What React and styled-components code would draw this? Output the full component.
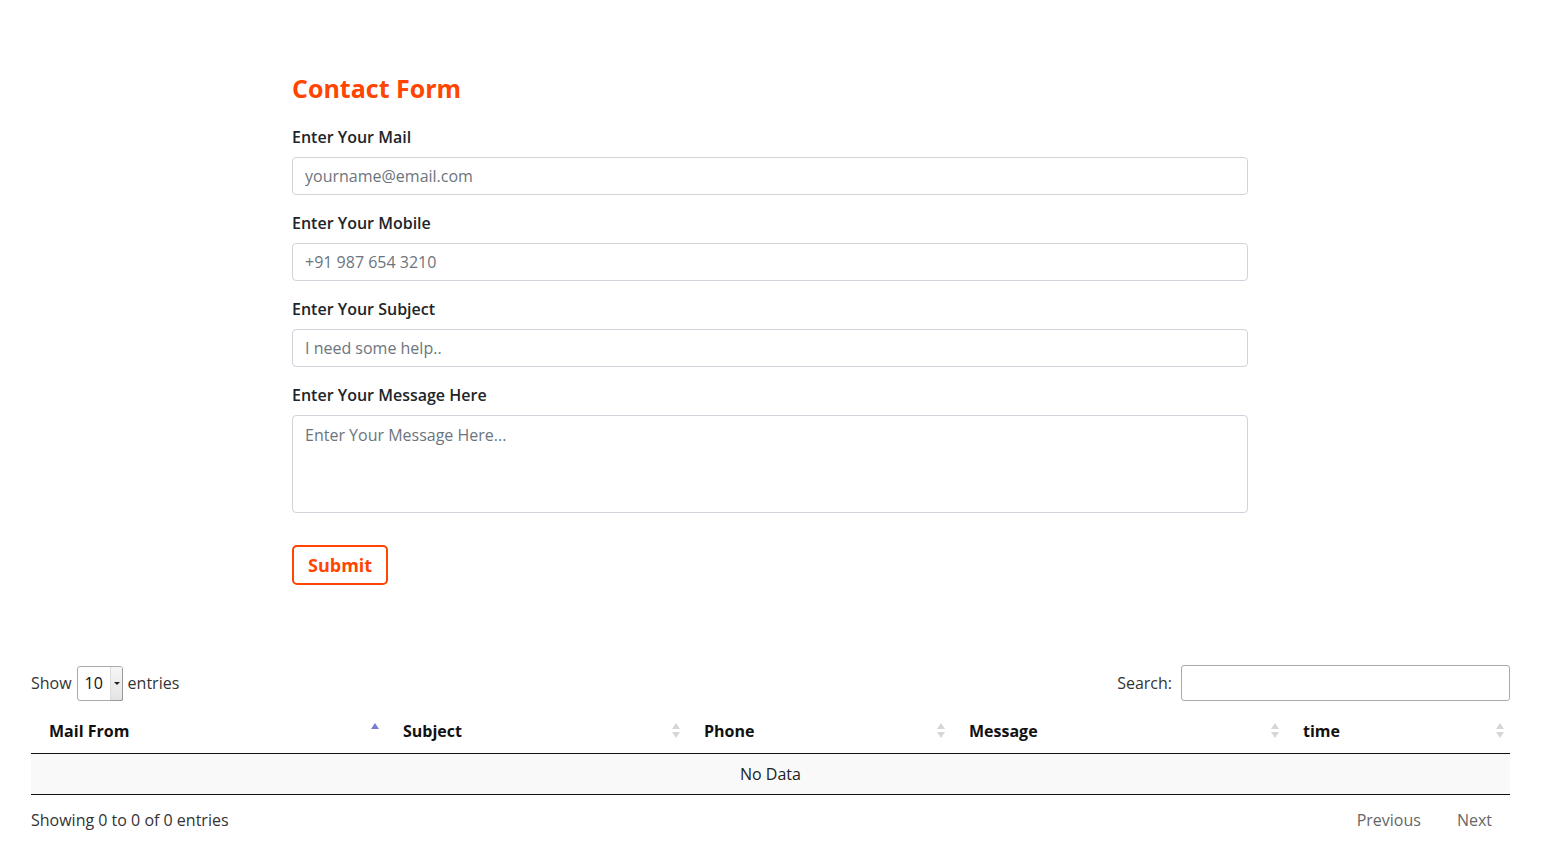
import React from 'react';
import styled, { createGlobalStyle } from 'styled-components';

const GlobalStyle = createGlobalStyle`
  html, body {
    margin: 0;
    padding: 0;
    background: #fff;
    font-family: "Open Sans", "Liberation Sans", sans-serif;
    color: #212529;
  }
  * { box-sizing: border-box; }
`;

const Page = styled.div`
  width: 1541px;
  padding: 73px 31px 16px;
`;

const FormBox = styled.form`
  width: 956px;
  margin-left: 261px;
`;

const Title = styled.h2`
  margin: 0 0 22px;
  font-size: 25px;
  line-height: 30px;
  font-weight: 700;
  color: #ff4500;
`;

const Field = styled.div`
  margin-bottom: ${(p) => (p.last ? '32px' : '16px')};
`;

const Label = styled.label`
  display: block;
  font-size: 16px;
  line-height: 24px;
  font-weight: 600;
  color: #212529;
  margin-bottom: 8px;
`;

const Input = styled.input`
  display: block;
  width: 100%;
  height: 38px;
  padding: 6px 12px;
  font-family: inherit;
  font-size: 16px;
  color: #495057;
  border: 1px solid #ced4da;
  border-radius: 4px;
  outline: none;
  &::placeholder { color: #6c757d; }
`;

const TextArea = styled.textarea`
  display: block;
  width: 100%;
  height: 98px;
  padding: 7px 12px;
  font-family: inherit;
  font-size: 16px;
  line-height: 24px;
  color: #495057;
  border: 1px solid #ced4da;
  border-radius: 4px;
  resize: none;
  outline: none;
  &::placeholder { color: #6c757d; }
`;

const SubmitButton = styled.button`
  height: 40px;
  padding: 0 14px;
  background: #fff;
  border: 2px solid #ff4500;
  border-radius: 5px;
  color: #ff4500;
  font-family: inherit;
  font-size: 18px;
  font-weight: 700;
  cursor: pointer;
`;

const TableArea = styled.section`
  margin-top: 80px;
  font-size: 16px;
  color: #333;
`;

const Controls = styled.div`
  display: flex;
  align-items: center;
  justify-content: space-between;
  height: 36px;
  margin-bottom: 8px;
`;

const Inline = styled.label`
  display: flex;
  align-items: center;
  gap: 5px;
  line-height: 24px;
`;

const SelectWrap = styled.span`
  position: relative;
  display: inline-block;
  width: 46px;
  height: 35px;
`;

const Select = styled.select`
  appearance: none;
  width: 100%;
  height: 100%;
  padding: 0 0 0 7px;
  font-family: inherit;
  font-size: 16px;
  color: #111;
  background: #fff;
  border: 1px solid #aaa;
  border-radius: 3px;
  outline: none;
`;

const SelectArrow = styled.span`
  position: absolute;
  top: 1px;
  right: 1px;
  bottom: 1px;
  width: 12px;
  background: linear-gradient(#f6f6f6, #e4e4e4);
  border-left: 1px solid #ddd;
  border-radius: 0 2px 2px 0;
  box-shadow: 1px 1px 0 #999;
  pointer-events: none;
  &::after {
    content: '';
    position: absolute;
    top: 15px;
    left: 3px;
    border-left: 3px solid transparent;
    border-right: 3px solid transparent;
    border-top: 3px solid #222;
  }
`;

const SearchInput = styled.input`
  width: 329px;
  height: 36px;
  margin-left: 4px;
  padding: 4px 8px;
  font-family: inherit;
  font-size: 16px;
  border: 1px solid #aaa;
  border-radius: 3px;
  outline: none;
`;

const Table = styled.table`
  width: 100%;
  border-collapse: collapse;
  table-layout: fixed;
`;

const Th = styled.th`
  position: relative;
  padding: 10px 18px;
  text-align: left;
  font-size: 16px;
  line-height: 24px;
  font-weight: 700;
  color: #111;
  border-bottom: 1px solid #111;
  cursor: pointer;
  &::before, &::after {
    content: '';
    position: absolute;
    right: 6px;
    border-left: 4px solid transparent;
    border-right: 4px solid transparent;
  }
  &::before {
    top: 14px;
    border-bottom: 6px solid ${(p) => (p.sorted ? '#7b7bd8' : '#d6d6d6')};
  }
  &::after {
    top: 23px;
    display: ${(p) => (p.sorted ? 'none' : 'block')};
    border-top: 6px solid #d6d6d6;
  }
`;

const EmptyCell = styled.td`
  padding: 8px 10px;
  text-align: center;
  line-height: 24px;
  color: #222;
  background: #f9f9f9;
  border-bottom: 1px solid #111;
`;

const Footer = styled.div`
  display: flex;
  justify-content: space-between;
  align-items: center;
  margin-top: 12px;
  line-height: 24px;
`;

const Pager = styled.div`
  display: flex;
`;

const PageButton = styled.span`
  padding: 1px 18px;
  color: #666;
  cursor: default;
`;

const columns = [
  { name: 'Mail From', width: 354, sorted: true },
  { name: 'Subject', width: 301 },
  { name: 'Phone', width: 265 },
  { name: 'Message', width: 334 },
  { name: 'time', width: 225 },
];

const fields = [
  { label: 'Enter Your Mail', placeholder: 'yourname@email.com', type: 'email' },
  { label: 'Enter Your Mobile', placeholder: '+91 987 654 3210', type: 'tel' },
  { label: 'Enter Your Subject', placeholder: 'I need some help..', type: 'text' },
];

function App() {
  return (
    <Page>
      <GlobalStyle />
      <FormBox onSubmit={(e) => e.preventDefault()}>
        <Title>Contact Form</Title>
        {fields.map((f) => (
          <Field key={f.label}>
            <Label>{f.label}</Label>
            <Input type={f.type} placeholder={f.placeholder} />
          </Field>
        ))}
        <Field last>
          <Label>Enter Your Message Here</Label>
          <TextArea placeholder="Enter Your Message Here..." />
        </Field>
        <SubmitButton type="submit">Submit</SubmitButton>
      </FormBox>

      <TableArea>
        <Controls>
          <Inline>
            Show
            <SelectWrap>
              <Select defaultValue="10">
                <option value="10">10</option>
                <option value="25">25</option>
                <option value="50">50</option>
                <option value="100">100</option>
              </Select>
              <SelectArrow />
            </SelectWrap>
            entries
          </Inline>
          <Inline>
            Search:
            <SearchInput type="search" />
          </Inline>
        </Controls>
        <Table>
          <colgroup>
            {columns.map((c) => (
              <col key={c.name} style={{ width: c.width }} />
            ))}
          </colgroup>
          <thead>
            <tr>
              {columns.map((c) => (
                <Th key={c.name} sorted={c.sorted}>{c.name}</Th>
              ))}
            </tr>
          </thead>
          <tbody>
            <tr>
              <EmptyCell colSpan={5}>No Data</EmptyCell>
            </tr>
          </tbody>
        </Table>
        <Footer>
          <span>Showing 0 to 0 of 0 entries</span>
          <Pager>
            <PageButton>Previous</PageButton>
            <PageButton>Next</PageButton>
          </Pager>
        </Footer>
      </TableArea>
    </Page>
  );
}

export default App;
